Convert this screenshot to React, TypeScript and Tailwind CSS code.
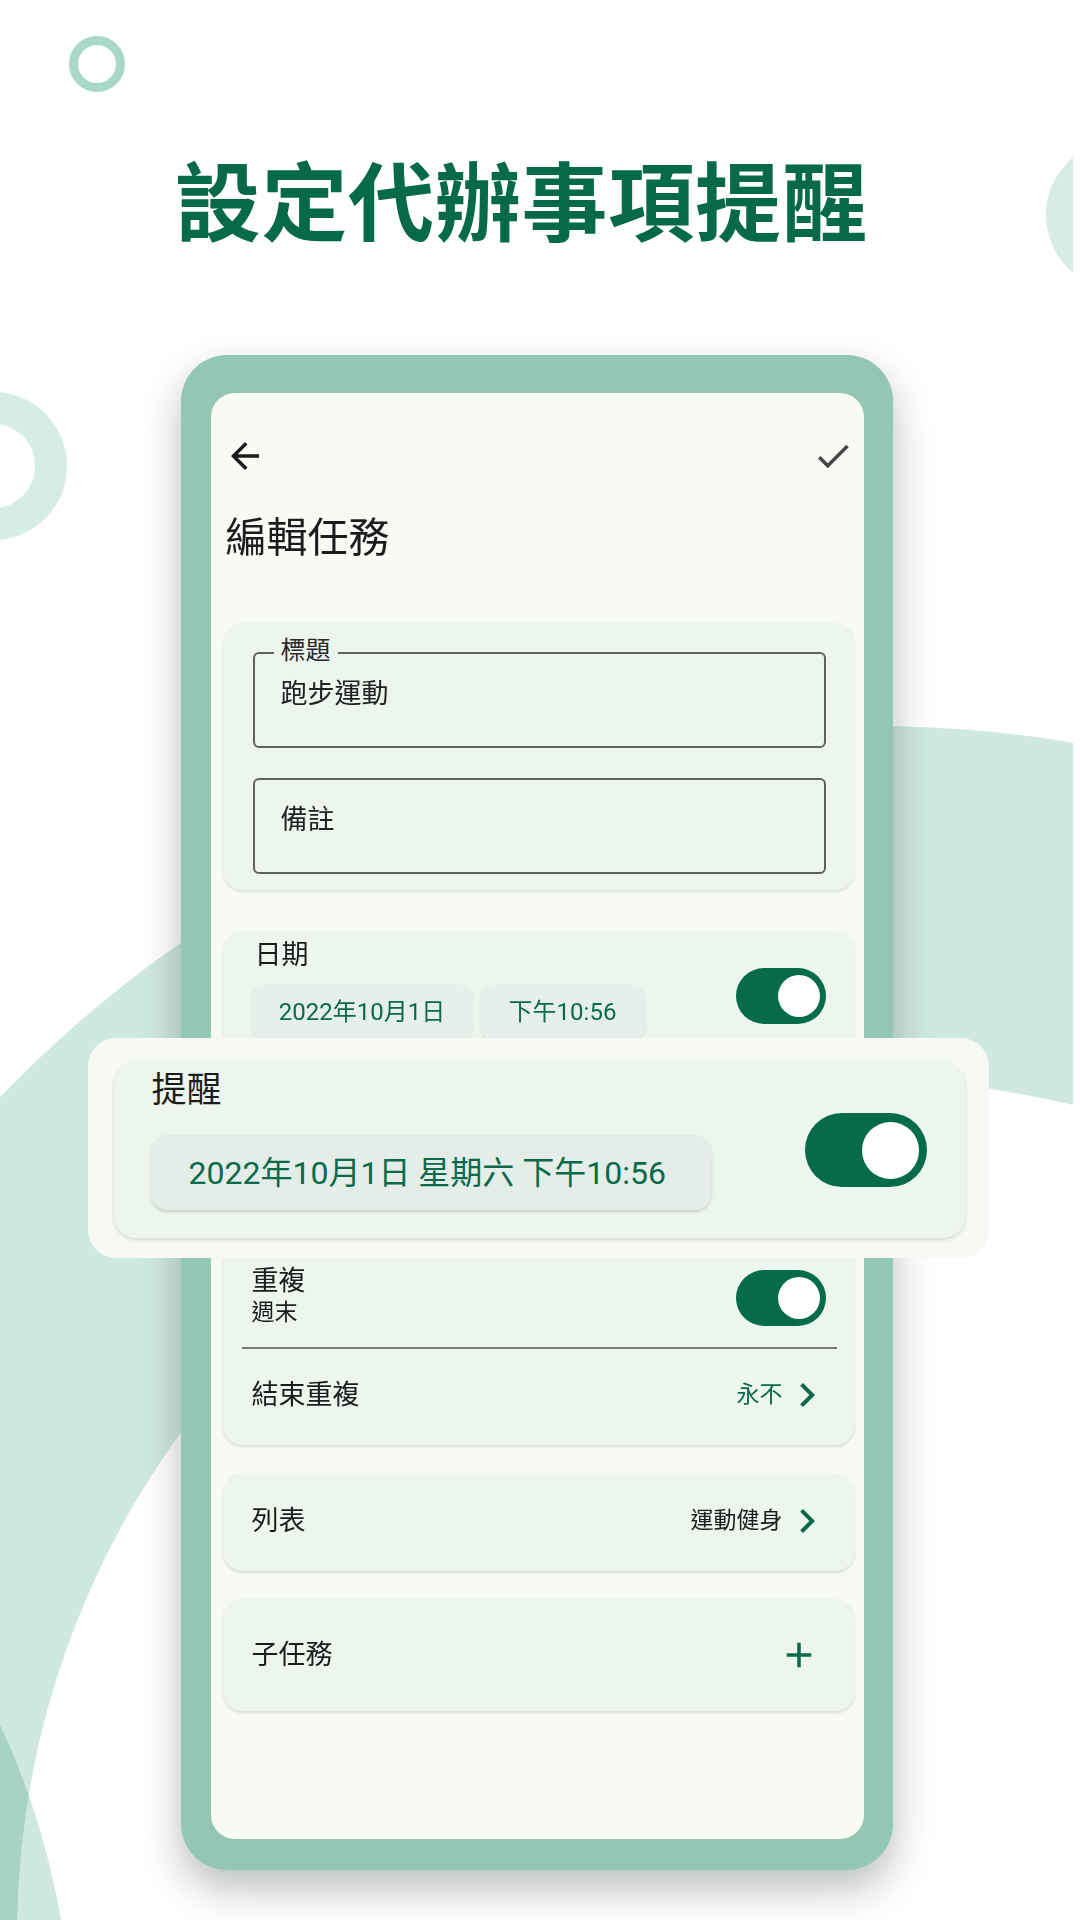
import React from "react";

const GREEN = "#0a6a4a";

function ArrowBack() {
  return (
    <svg width="42" height="42" viewBox="0 0 24 24">
      <path d="M20 11H7.83l5.59-5.59L12 4l-8 8 8 8 1.41-1.41L7.83 13H20v-2z" fill="#1b1b1b" />
    </svg>
  );
}

function Check() {
  return (
    <svg width="42" height="42" viewBox="0 0 24 24">
      <path d="M9 16.17L4.83 12l-1.42 1.41L9 19 21 7l-1.41-1.41z" fill="#454545" />
    </svg>
  );
}

function Chevron() {
  return (
    <svg width="48" height="48" viewBox="0 0 24 24">
      <path d="M10 6L8.59 7.41 13.17 12l-4.58 4.59L10 18l6-6z" fill={GREEN} />
    </svg>
  );
}

function Plus() {
  return (
    <svg width="42" height="42" viewBox="0 0 24 24">
      <path d="M19 13h-6v6h-2v-6H5v-2h6V5h2v6h6v2z" fill={GREEN} />
    </svg>
  );
}

function Toggle({ big = false }: { big?: boolean }) {
  if (big) {
    return (
      <div className="flex h-[74px] w-[122px] shrink-0 items-center justify-end rounded-full bg-[#056b4b] pr-[8px]">
        <div className="h-[57px] w-[57px] rounded-full bg-white" />
      </div>
    );
  }
  return (
    <div className="flex h-[56px] w-[90px] shrink-0 items-center justify-end rounded-full bg-[#056b4b] pr-[6px]">
      <div className="h-[42px] w-[42px] rounded-full bg-white" />
    </div>
  );
}

function Field({ label, value }: { label?: string; value: string }) {
  return (
    <div className="relative h-[96px] rounded-[6px] border-2 border-[#606060] pl-[26px] pt-[23px] text-[27px] leading-[34px] text-[#222]">
      {label && (
        <span className="absolute -top-[18px] left-[19px] bg-[#edf5ef] px-[7px] text-[25px] leading-[30px] text-[#2a2a2a]">
          {label}
        </span>
      )}
      {value}
    </div>
  );
}

export default function App() {
  return (
    <div className="relative h-[1920px] w-[1080px] overflow-hidden bg-white font-['Roboto','Noto_Sans_CJK_TC',sans-serif]">
      <svg className="absolute left-0 top-0" width="1073" height="1920" viewBox="0 0 1073 1920">
        <circle cx="872" cy="1936" r="1210" fill="#cfe8e0" />
        <circle cx="872" cy="1936" r="855" fill="#ffffff" />
        <circle cx="-700" cy="2050" r="772" fill="#cfe8e0" style={{ mixBlendMode: "multiply" }} />
        <circle cx="-7" cy="466" r="58" fill="none" stroke="#d6ede6" strokeWidth="32" />
        <circle cx="97" cy="64" r="23.5" fill="none" stroke="#a9d8c9" strokeWidth="9" />
        <circle cx="1121" cy="215" r="75" fill="#d6ece5" />
      </svg>

      <div className="relative flex w-[1073px] flex-col items-center">
        <h1 className="mt-[155px] h-[86px] pr-[30px] font-['Noto_Sans_CJK_TC',sans-serif] text-[86px] font-bold leading-none tracking-[0.7px] text-[#066a4a]">
          設定代辦事項提醒
        </h1>

        {/* Phone */}
        <div className="relative mt-[114px] w-[712px] rounded-[46px] bg-[#93c7b4] pb-[31px] pl-[30px] pr-[29px] pt-[38px] shadow-[0_18px_40px_rgba(0,20,10,0.28)]">
          <div className="flex h-[1446px] w-[653px] flex-col overflow-hidden rounded-[24px] bg-[#f8faf6]">
            <div className="flex justify-between pl-[13px] pr-[10px] pt-[42px]">
              <ArrowBack />
              <Check />
            </div>
            <div className="mt-[37px] pl-[15px] text-[41px] leading-[48px] text-[#1c1c1c]">編輯任務</div>

            <div className="ml-[12px] mr-[9px] mt-[61px] flex flex-col">
              {/* Card 1 */}
              <div className="flex flex-col gap-[30px] rounded-[20px] bg-[#edf5ef] pb-[16px] pl-[30px] pr-[29px] pt-[29px] shadow-[0_2px_3px_rgba(0,0,0,0.1)]">
                <Field label="標題" value="跑步運動" />
                <Field value="備註" />
              </div>

              {/* Card 2 */}
              <div className="mt-[41px] flex flex-col rounded-[20px] bg-[#edf5ef] shadow-[0_2px_3px_rgba(0,0,0,0.12)]">
                <div className="flex h-[108px] justify-between pl-[29px] pr-[29px]">
                  <div className="flex flex-col pt-[8px]">
                    <div className="pl-[3px] text-[27px] leading-[32px] text-[#1c1c1c]">日期</div>
                    <div className="mt-[14px] flex gap-[7px]">
                      <div className="flex h-[54px] w-[221px] items-center justify-center rounded-[12px] bg-[#e6efe9] text-[24px] text-[#0a6a4a] shadow-[0_1px_2px_rgba(0,0,0,0.1)]">
                        2022年10月1日
                      </div>
                      <div className="flex h-[54px] w-[166px] items-center justify-center rounded-[12px] bg-[#e6efe9] text-[24px] text-[#0a6a4a] shadow-[0_1px_2px_rgba(0,0,0,0.1)]">
                        下午10:56
                      </div>
                    </div>
                  </div>
                  <div className="mt-[37px]">
                    <Toggle />
                  </div>
                </div>

                {/* row covered by the pop-out */}
                <div className="h-[227px]" />

                <div className="flex h-[81px] items-start justify-between pl-[29px] pr-[29px]">
                  <div className="flex flex-col">
                    <div className="text-[27px] leading-[31px] text-[#1c1c1c]">重複</div>
                    <div className="text-[23px] leading-[31px] text-[#1c1c1c]">週末</div>
                  </div>
                  <div className="mt-[4px]">
                    <Toggle />
                  </div>
                </div>

                <div className="ml-[19px] mr-[18px] h-[2px] bg-[#7a7a7a]" />

                <div className="flex h-[96px] items-center justify-between pb-[5px] pl-[29px] pr-[24px]">
                  <div className="text-[27px] leading-[32px] text-[#1c1c1c]">結束重複</div>
                  <div className="flex items-center">
                    <span className="text-[23px] leading-[30px] text-[#0a6a4a]">永不</span>
                    <Chevron />
                  </div>
                </div>
              </div>

              {/* Card 3 */}
              <div className="mt-[28px] flex h-[98px] items-center justify-between rounded-[20px] bg-[#edf5ef] pb-[3px] pl-[29px] pr-[24px] shadow-[0_2px_3px_rgba(0,0,0,0.12)]">
                <div className="text-[27px] leading-[32px] text-[#1c1c1c]">列表</div>
                <div className="flex items-center">
                  <span className="text-[23px] leading-[30px] text-[#1f1f1f]">運動健身</span>
                  <Chevron />
                </div>
              </div>

              {/* Card 4 */}
              <div className="mt-[28px] flex h-[112px] items-center justify-between rounded-[20px] bg-[#edf5ef] pl-[29px] pr-[35px] shadow-[0_2px_3px_rgba(0,0,0,0.12)]">
                <div className="text-[27px] leading-[32px] text-[#1c1c1c]">子任務</div>
                <Plus />
              </div>
            </div>
          </div>

          {/* Reminder pop-out overlay */}
          <div className="absolute left-[-93px] top-[683px] h-[220px] w-[901px] rounded-[28px] bg-[#f7faf4] pb-[20px] pl-[26px] pr-[24px] pt-[24px]">
            <div className="flex h-full items-center justify-between rounded-[22px] bg-[#ecf5ee] pl-[37px] pr-[38px] shadow-[0_2px_4px_rgba(0,0,0,0.13)]">
              <div className="flex flex-col self-start pt-[9px]">
                <div className="pl-[1px] text-[35px] leading-[40px] text-[#1c1c1c]">提醒</div>
                <div className="mt-[24px] flex h-[75px] w-[560px] items-center rounded-[16px] bg-[#e4ede8] pl-[38px] text-[32px] text-[#0a6a4a] shadow-[0_2px_3px_rgba(0,0,0,0.15)]">
                  2022年10月1日 星期六 下午10:56
                </div>
              </div>
              <Toggle big />
            </div>
          </div>
        </div>
      </div>
    </div>
  );
}
